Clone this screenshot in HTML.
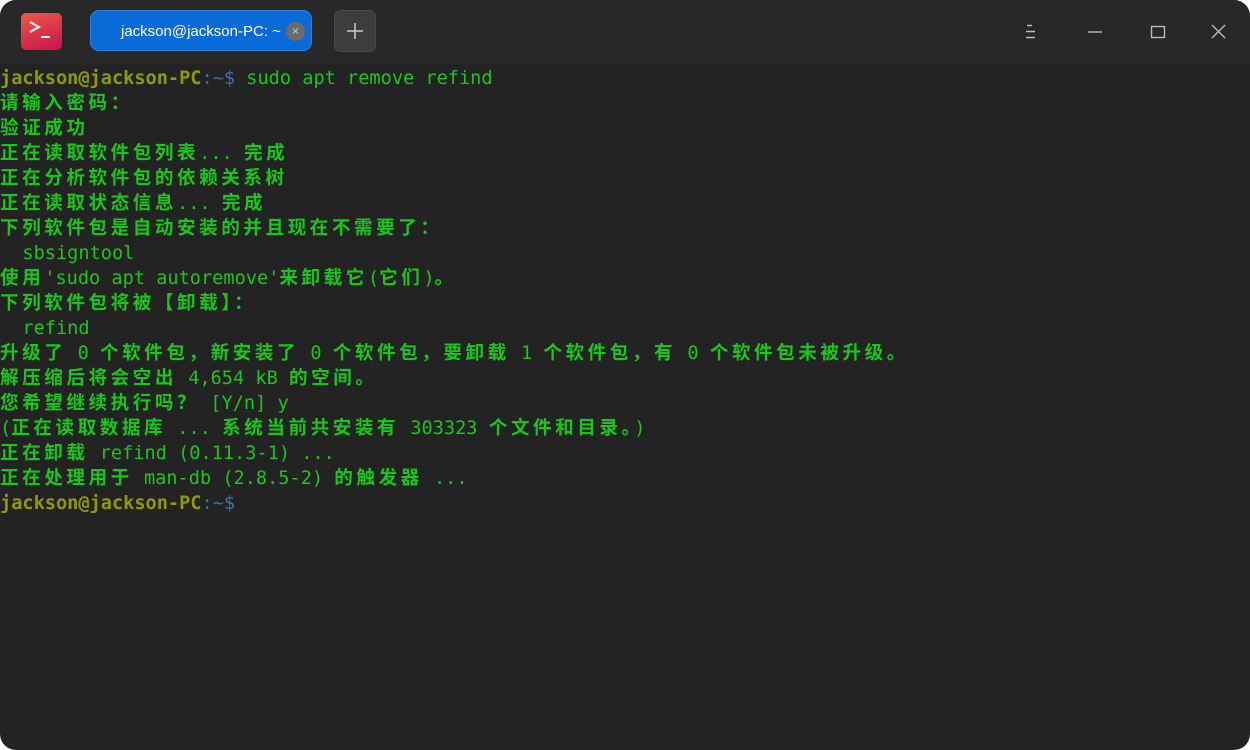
<!DOCTYPE html>
<html><head><meta charset="utf-8"><style>
html,body{margin:0;padding:0;background:#fff;}
.win{position:absolute;left:0;top:0;width:1250px;height:750px;border-radius:16px;overflow:hidden;background:#232323;}
.tb{position:absolute;left:0;top:0;width:1250px;height:63px;background:#282828;}
.logo{position:absolute;left:21px;top:13px;width:41px;height:37px;border-radius:5px;background:linear-gradient(160deg,#f0584a,#c8134a);}
.tab{position:absolute;left:90px;top:10px;width:222px;height:41px;border-radius:9px;background:#0a6ad8;border:1px solid #2b7fe0;box-sizing:border-box;color:#fff;font:15px "Liberation Sans",sans-serif;}
.tab span{position:absolute;left:30px;top:12px;}
.x{position:absolute;left:195px;top:11px;width:19px;height:19px;border-radius:50%;background:#6b6b6b;color:#ccc;font-size:12px;line-height:18px;text-align:center;}
.plus{position:absolute;left:334px;top:10px;width:42px;height:42px;border-radius:7px;background:#3d3d3d;border:1px solid #4a4a4a;box-sizing:border-box;}
.t{position:absolute;left:0;top:66px;font:18.6px "DejaVu Sans Mono","Liberation Mono","Noto Sans CJK SC",monospace;color:#1bc61b;}
.t div{height:25px;line-height:25px;white-space:pre;overflow:visible}
b{font-family:"Noto Sans CJK SC",sans-serif;letter-spacing:.19em;font-weight:bold;line-height:0}
.u{color:#8f9a0a;font-weight:bold}.p{color:#3f6fa8}
</style></head><body><div class="win">
<div class="tb">
<div class="logo"><svg width="41" height="37"><path d="M9 9l9 5-9 5" stroke="#fff" stroke-width="2" fill="none"/><path d="M20 24h9" stroke="#fff" stroke-width="2"/></svg></div>
<div class="tab"><span>jackson@jackson-PC: ~</span><div class="x">×</div></div>
<div class="plus"><svg width="40" height="40"><path d="M20 12v16M12 20h16" stroke="#ccc" stroke-width="1.5"/></svg></div>
<svg style="position:absolute;left:1020px;top:20px" width="220" height="25">
<path d="M7 5.5h5M6 11.5h9M6 17.5h9" stroke="#bbb" stroke-width="1.4"/>
<path d="M68 12h14" stroke="#bbb" stroke-width="1.4"/>
<rect x="131.5" y="6.5" width="13" height="11" stroke="#bbb" stroke-width="1.4" fill="none"/>
<path d="M192 5l13 13M205 5l-13 13" stroke="#bbb" stroke-width="1.4"/>
</svg>
</div>
<div class="t">
<div><span class="u">jackson@jackson-PC</span><span class="p">:~$</span> sudo apt remove refind</div>
<div><b>请输入密码：</b></div>
<div><b>验证成功</b></div>
<div><b>正在读取软件包列表</b>... <b>完成</b></div>
<div><b>正在分析软件包的依赖关系树</b></div>
<div><b>正在读取状态信息</b>... <b>完成</b></div>
<div><b>下列软件包是自动安装的并且现在不需要了：</b></div>
<div>  sbsigntool</div>
<div><b>使用</b>'sudo apt autoremove'<b>来卸载它</b>(<b>它们</b>)<b>。</b></div>
<div><b>下列软件包将被【卸载】：</b></div>
<div>  refind</div>
<div><b>升级了</b> 0 <b>个软件包，新安装了</b> 0 <b>个软件包，要卸载</b> 1 <b>个软件包，有</b> 0 <b>个软件包未被升级。</b></div>
<div><b>解压缩后将会空出</b> 4,654 kB <b>的空间。</b></div>
<div><b>您希望继续执行吗？</b> [Y/n] y</div>
<div>(<b>正在读取数据库</b> ... <b>系统当前共安装有</b> 303323 <b>个文件和目录。</b>)</div>
<div><b>正在卸载</b> refind (0.11.3-1) ...</div>
<div><b>正在处理用于</b> man-db (2.8.5-2) <b>的触发器</b> ...</div>
<div><span class="u">jackson@jackson-PC</span><span class="p">:~$</span></div>
</div>
</div></body></html>
